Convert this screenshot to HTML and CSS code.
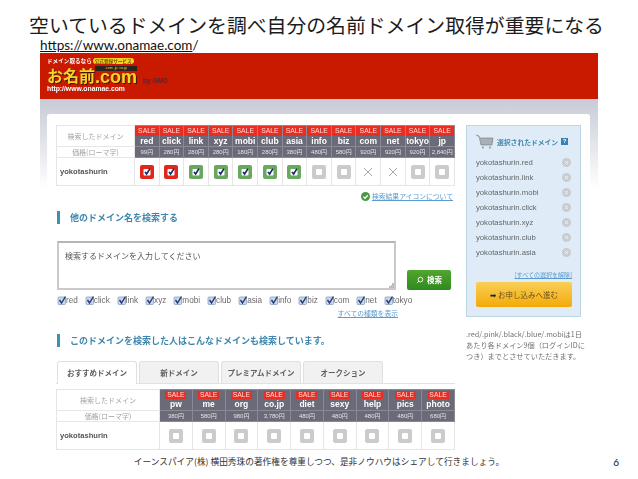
FILE: index.html
```html
<!DOCTYPE html>
<html lang="ja">
<head>
<meta charset="utf-8"/>
<title>空いているドメインを調べ自分の名前ドメイン取得が重要になる</title>
<link rel="stylesheet" href="styles.css">
</head>
<body>
<svg class="defs" width="0" height="0">
  <symbol id="box" viewBox="0 0 14 14"><rect width="14" height="14" rx="2" fill="currentColor"/><rect x="4" y="4" width="6" height="6" rx="1" fill="#fff"/></symbol>
  <symbol id="chk" viewBox="0 0 14 14"><rect width="14" height="14" rx="2" fill="currentColor"/><rect x="3.5" y="4" width="7" height="6.5" rx="1" fill="#fff"/><path d="M5 7l1.6 2L10 3.6" fill="none" stroke="#17306b" stroke-width="1.7"/></symbol>
  <symbol id="cross" viewBox="0 0 14 14"><path d="M3 3l8 8M11 3l-8 8" fill="none" stroke="#a9a9a9" stroke-width="1"/></symbol>
  <symbol id="del" viewBox="0 0 9 9"><circle cx="4.5" cy="4.5" r="4.5" fill="#c9cdd0"/><path d="M3 3l3 3M6 3l-3 3" stroke="#eef1f3" stroke-width="1"/></symbol>
  <symbol id="tick" viewBox="0 0 9 9"><rect x="1" y="1" width="7.5" height="7.5" rx="1" fill="#c9d8ea" stroke="#7f97b8" stroke-width=".7"/><path d="M2.5 4l2 3L8.5 .5" fill="none" stroke="#1f3a6e" stroke-width="1.4"/></symbol>
</svg>

<h1 class="title">空いているドメインを調べ自分の名前ドメイン取得が重要になる</h1>
<p class="url"><u>https://www.onamae.com</u>/</p>

<div class="shot">
  <header class="brand">
    <div class="logo">
      <div class="logo-top">ドメイン取るなら<span class="logo-pill">公式登録サービス</span></div>
      <div class="logo-name">
        <span class="logo-kanji">お名前</span>
        <span class="logo-right"><span class="logo-tag">.com .jp .co.jp</span><span class="logo-com">.com</span></span>
      </div>
      <div class="logo-url">http://www.onamae.com</div>
    </div>
    <span class="logo-gmo">by GMO</span>
  </header>

  <div class="backdrop">
    <div class="card">
      <main class="main">
        <table class="dom first">
          <tr class="head">
            <th class="lead">検索したドメイン</th>
            <th><b>SALE</b>red</th><th><b>SALE</b>click</th><th><b>SALE</b>link</th><th><b>SALE</b>xyz</th><th><b>SALE</b>mobi</th><th><b>SALE</b>club</th><th><b>SALE</b>asia</th><th><b>SALE</b>info</th><th><b>SALE</b>biz</th><th><b>SALE</b>com</th><th><b>SALE</b>net</th><th><b>SALE</b>tokyo</th><th><b>SALE</b>jp</th>
          </tr>
          <tr class="price">
            <th class="lead">価格(ローマ字)</th>
            <td>99円</td><td>280円</td><td>280円</td><td>280円</td><td>180円</td><td>280円</td><td>380円</td><td>480円</td><td>580円</td><td>920円</td><td>920円</td><td>920円</td><td>2,840円</td>
          </tr>
          <tr class="row">
            <td class="name">yokotashurin</td>
            <td><svg class="mark red"><use href="#chk"/></svg></td>
            <td><svg class="mark red"><use href="#chk"/></svg></td>
            <td><svg class="mark green"><use href="#chk"/></svg></td>
            <td><svg class="mark green"><use href="#chk"/></svg></td>
            <td><svg class="mark green"><use href="#chk"/></svg></td>
            <td><svg class="mark green"><use href="#chk"/></svg></td>
            <td><svg class="mark green"><use href="#chk"/></svg></td>
            <td><svg class="mark grey"><use href="#box"/></svg></td>
            <td><svg class="mark grey"><use href="#box"/></svg></td>
            <td><svg class="mark"><use href="#cross"/></svg></td>
            <td><svg class="mark"><use href="#cross"/></svg></td>
            <td><svg class="mark grey"><use href="#box"/></svg></td>
            <td><svg class="mark grey"><use href="#box"/></svg></td>
          </tr>
        </table>
        <div class="legend">
          <svg class="legend-icon" viewBox="0 0 9 9"><circle cx="4.5" cy="4.5" r="4.5" fill="#4a9a45"/><path d="M2.4 4.6l1.6 1.6 2.8-3" fill="none" stroke="#fff" stroke-width="1.3"/></svg>
          <a class="link">検索結果アイコンについて</a>
        </div>

        <h2 class="heading first-heading">他のドメイン名を検索する</h2>
        <div class="search">
          <div class="input">検索するドメインを入力してください</div>
          <div class="go">
            <svg class="go-icon" viewBox="0 0 9 9"><circle cx="5" cy="4" r="2.6" fill="none" stroke="#fff" stroke-width="1"/><path d="M3 6L1.2 8" stroke="#fff" stroke-width="1"/></svg>検索
          </div>
        </div>
        <div class="tlds">
          <span><svg class="tick"><use href="#tick"/></svg>red</span>
          <span><svg class="tick"><use href="#tick"/></svg>click</span>
          <span><svg class="tick"><use href="#tick"/></svg>link</span>
          <span><svg class="tick"><use href="#tick"/></svg>xyz</span>
          <span><svg class="tick"><use href="#tick"/></svg>mobi</span>
          <span><svg class="tick"><use href="#tick"/></svg>club</span>
          <span><svg class="tick"><use href="#tick"/></svg>asia</span>
          <span><svg class="tick"><use href="#tick"/></svg>info</span>
          <span><svg class="tick"><use href="#tick"/></svg>biz</span>
          <span><svg class="tick"><use href="#tick"/></svg>com</span>
          <span><svg class="tick"><use href="#tick"/></svg>net</span>
          <span><svg class="tick"><use href="#tick"/></svg>tokyo</span>
        </div>
        <div class="all-types"><a class="link">すべての種類を表示</a></div>

        <h2 class="heading">このドメインを検索した人はこんなドメインも検索しています。</h2>
        <nav class="tabs">
          <span class="tab active">おすすめドメイン</span>
          <span class="tab">新ドメイン</span>
          <span class="tab">プレミアムドメイン</span>
          <span class="tab">オークション</span>
        </nav>
        <table class="dom second">
          <tr class="head">
            <th class="lead">検索したドメイン</th>
            <th><b>SALE</b>pw</th><th><b>SALE</b>me</th><th><b>SALE</b>org</th><th><b>SALE</b>co.jp</th><th><b>SALE</b>diet</th><th><b>SALE</b>sexy</th><th><b>SALE</b>help</th><th><b>SALE</b>pics</th><th><b>SALE</b>photo</th>
          </tr>
          <tr class="price">
            <th class="lead">価格(ローマ字)</th>
            <td>380円</td><td>580円</td><td>980円</td><td>3,780円</td><td>480円</td><td>480円</td><td>480円</td><td>480円</td><td>680円</td>
          </tr>
          <tr class="row">
            <td class="name">yokotashurin</td>
            <td><svg class="mark grey"><use href="#box"/></svg></td>
            <td><svg class="mark grey"><use href="#box"/></svg></td>
            <td><svg class="mark grey"><use href="#box"/></svg></td>
            <td><svg class="mark grey"><use href="#box"/></svg></td>
            <td><svg class="mark grey"><use href="#box"/></svg></td>
            <td><svg class="mark grey"><use href="#box"/></svg></td>
            <td><svg class="mark grey"><use href="#box"/></svg></td>
            <td><svg class="mark grey"><use href="#box"/></svg></td>
            <td><svg class="mark grey"><use href="#box"/></svg></td>
          </tr>
        </table>
      </main>

      <aside class="side">
        <div class="panel">
          <div class="panel-head">
            <svg class="cart" viewBox="0 0 18 15"><path d="M0 1l3 1 2 9h11l1-7H4" fill="#aab1b6" stroke="#6f7579" stroke-width=".6"/><circle cx="7" cy="13.5" r="1" fill="#8a9094"/><circle cx="14" cy="13.5" r="1" fill="#8a9094"/></svg>
            <span>選択されたドメイン</span><i class="help">?</i>
          </div>
          <ul class="picked">
            <li>yokotashurin.red<svg class="del"><use href="#del"/></svg></li>
            <li>yokotashurin.link<svg class="del"><use href="#del"/></svg></li>
            <li>yokotashurin.mobi<svg class="del"><use href="#del"/></svg></li>
            <li>yokotashurin.click<svg class="del"><use href="#del"/></svg></li>
            <li>yokotashurin.xyz<svg class="del"><use href="#del"/></svg></li>
            <li>yokotashurin.club<svg class="del"><use href="#del"/></svg></li>
            <li>yokotashurin.asia<svg class="del"><use href="#del"/></svg></li>
          </ul>
          <div class="clear"><a class="link">[すべての選択を解除]</a></div>
          <div class="apply"><span class="arrow">➡</span> お申し込みへ進む</div>
        </div>
        <p class="note">.red/.pink/.black/.blue/.mobiは1日<br>あたり各ドメイン9個（ログインIDに<br>つき）までとさせていただきます。</p>
      </aside>
    </div>
  </div>
</div>

<footer class="foot">
  <span class="credit">イーンスパイア(株) 横田秀珠の著作権を尊重しつつ、是非ノウハウはシェアして行きましょう。</span>
  <span class="page">6</span>
</footer>
</body>
</html>
```
FILE: styles.css
```css
html, body {
  margin: 0;
  padding: 0;
}
body {
  width: 638px;
  height: 479px;
  overflow: hidden;
  background: #fff;
  color: #111;
  font-family: "Liberation Sans", "Noto Sans CJK JP", sans-serif;
}
.defs {
  position: absolute;
}
.title {
  margin: 0;
  height: 38px;
  padding: 12px 5px 0 0;
  box-sizing: border-box;
  text-align: center;
  font: 400 19.85px/26px "Noto Sans CJK JP", sans-serif;
  color: #1c1c1c;
  white-space: nowrap;
}
.url {
  margin: 0 0 0 40px;
  height: 15px;
  font: 400 13.5px/15px Lato, sans-serif;
  color: #111;
}

/* embedded screenshot */
.shot {
  margin-left: 40px;
  width: 558px;
  height: 399px;
  filter: blur(.4px);
  font-family: "Liberation Sans", "Noto Sans CJK JP", sans-serif;
  overflow: hidden;
}
.brand {
  display: flex;
  align-items: flex-end;
  height: 46px;
  padding: 5px 0 0 7px;
  box-sizing: border-box;
  background: #c91a00;
}
.logo {
  width: 95px;
  height: 41px;
  align-self: flex-start;
}
.logo-top {
  height: 7px;
  font: 700 5.6px/7px "Noto Sans CJK JP", sans-serif;
  color: #fff;
  white-space: nowrap;
}
.logo-pill {
  margin-left: 1px;
  padding: 0 2px;
  border-radius: 3px;
  background: #f3d21f;
  color: #6d5200;
  font-size: 4.6px;
}
.logo-name {
  display: flex;
  align-items: flex-end;
  height: 18px;
  margin-top: 1px;
  color: #f6d428;
  text-shadow: 1px 1px 0 #3a1b00;
  white-space: nowrap;
}
.logo-kanji {
  font: 700 16px/18px "Noto Sans CJK JP", sans-serif;
}
.logo-right {
  display: flex;
  flex-direction: column;
}
.logo-tag {
  height: 5px;
  background: #2a2320;
  color: #f6d428;
  text-align: center;
  text-shadow: none;
  font: 400 3.6px/5px "Liberation Sans", sans-serif;
}
.logo-com {
  font: 700 18px/13px "Liberation Sans", sans-serif;
}
.logo-url {
  margin-top: 1px;
  height: 8px;
  font: 700 6.8px/8px "Liberation Sans", sans-serif;
  color: #fff;
  white-space: nowrap;
}
.logo-gmo {
  margin: 0 0 15px 1px;
  font: 700 6.5px/6px "Liberation Sans", sans-serif;
  color: #5f2230;
}
.backdrop {
  padding-top: 15px;
  height: 353px;
  box-sizing: border-box;
  background: linear-gradient(#c8cbd6, #fff 90px);
}
.card {
  display: flex;
  gap: 11px;
  margin: 0 8px 0 7px;
  height: 338px;
  padding: 11px 9px 0;
  box-sizing: border-box;
  background: #fff;
  border-radius: 3px 3px 0 0;
}
.main {
  width: 399px;
  flex: none;
}
.side {
  width: 115px;
  flex: none;
}

/* domain tables */
.dom {
  width: 399px;
  border-collapse: collapse;
  table-layout: fixed;
  border: 1px solid #e4e4e4;
}
.dom th, .dom td {
  padding: 0;
  border: 1px solid #e6e6e6;
  text-align: center;
}
.first .lead { width: 77px; }
.second .lead { width: 102px; }
.head th {
  height: 20px;
  background: #6a6a78;
  border-color: #8a8a96;
  color: #fff;
  font: 700 8.5px/10px "Liberation Sans", sans-serif;
}
.head b {
  display: block;
  background: #ea2d22;
  font: 400 6.8px/10px "Liberation Sans", sans-serif;
  color: #ffdcd6;
}
.second .head b {
  width: 21px;
  height: 8px;
  margin: 0 auto;
  line-height: 8px;
  border-radius: 1px;
}
.price td {
  height: 10px;
  background: #6a6a78;
  border-color: #8a8a96;
  color: #e4e4ea;
  font: 400 6px/10px "Liberation Sans", "Noto Sans CJK JP", sans-serif;
}
.dom th.lead {
  background: #fff;
  border-color: #e6e6e6;
  color: #a3a3a3;
  font: 400 7px/10px "Noto Sans CJK JP", sans-serif;
}
.row td {
  height: 27px;
  background: #fff;
}
.dom .name {
  padding-left: 3px;
  text-align: left;
  color: #555;
  font: 700 7.6px/10px "Liberation Sans", sans-serif;
}
.mark {
  display: block;
  width: 14px;
  height: 14px;
  margin: 0 auto;
}
.red { color: #e1271b; }
.green { color: #69a85e; }
.grey { color: #cbcbcb; }
.link {
  color: #5a9bd0;
  text-decoration: underline;
  font: 400 6.8px/9px "Noto Sans CJK JP", sans-serif;
}
.legend {
  display: flex;
  justify-content: flex-end;
  align-items: center;
  gap: 2px;
  height: 9px;
  margin: 6px 2px 0 0;
}
.legend-icon {
  width: 9px;
  height: 9px;
}
.heading {
  margin: 0 0 0 1px;
  height: 13px;
  padding-left: 10px;
  border-left: 3px solid #3f8fb5;
  font: 700 9px/13px "Noto Sans CJK JP", sans-serif;
  color: #3f87ad;
  white-space: nowrap;
}
.first-heading {
  margin-top: 10px;
}
.search {
  display: flex;
  align-items: flex-end;
  gap: 11px;
  margin: 17px 0 0 1px;
}
.input {
  width: 339px;
  height: 49px;
  box-sizing: border-box;
  padding: 7px 6px;
  border: 2px solid #c9c9c9;
  border-top-color: #b5b5b5;
  background: linear-gradient(135deg, transparent 50%, #bdbdbd 50%) no-repeat right bottom / 6px 6px;
  color: #555;
  font: 400 8px/11px "Noto Sans CJK JP", sans-serif;
}
.go {
  display: flex;
  align-items: center;
  justify-content: center;
  gap: 3px;
  width: 44px;
  height: 20px;
  border-radius: 2px;
  background: linear-gradient(#52a52e, #2f8a1f);
  color: #fff;
  font: 700 7.5px/20px "Noto Sans CJK JP", sans-serif;
}
.go-icon {
  width: 8px;
  height: 8px;
}
.tlds {
  display: flex;
  gap: 7px;
  height: 9px;
  margin: 6px 0 0 1px;
  color: #6a6a6a;
  font: 400 8.2px/9px "Liberation Sans", sans-serif;
}
.tlds span {
  display: flex;
  align-items: center;
  white-space: nowrap;
}
.tick {
  width: 9px;
  height: 9px;
}
.all-types {
  width: 342px;
  height: 9px;
  margin-top: 1px;
  text-align: right;
  line-height: 9px;
}
.all-types + .heading {
  margin-top: 19px;
}
.tabs {
  display: flex;
  gap: 2px;
  height: 22px;
  margin-top: 14px;
  padding-left: 1px;
  border-bottom: 1px solid #e2e2e2;
}
.tab {
  width: 80px;
  height: 22px;
  box-sizing: border-box;
  border: 1px solid #e0e0e0;
  border-bottom: 0;
  border-radius: 3px 3px 0 0;
  background: #f1f1f1;
  color: #5d5d5d;
  text-align: center;
  font: 700 7.5px/21px "Noto Sans CJK JP", sans-serif;
}
.tab.active {
  height: 23px;
  background: #fff;
}
.second {
  margin-top: 5px;
}

/* right column */
.panel {
  height: 192px;
  box-sizing: border-box;
  padding: 0 8px 0 9px;
  border: 1px solid #bcd6e6;
  background: #dfebf6;
}
.panel-head {
  display: flex;
  align-items: center;
  gap: 3px;
  height: 29px;
  padding-top: 2px;
  box-sizing: border-box;
  color: #3f87ad;
  font: 700 6.8px/10px "Noto Sans CJK JP", sans-serif;
  white-space: nowrap;
}
.cart {
  width: 18px;
  height: 15px;
  flex: none;
}
.help {
  width: 7px;
  height: 7px;
  background: #3584b5;
  color: #fff;
  text-align: center;
  font: 700 6px/7px "Liberation Sans", sans-serif;
}
.picked {
  margin: 0;
  padding: 0;
  list-style: none;
}
.picked li {
  display: flex;
  justify-content: space-between;
  align-items: center;
  height: 15px;
  color: #62676b;
  font: 400 7.7px/15px "Liberation Sans", sans-serif;
}
.del {
  width: 9px;
  height: 9px;
  margin-right: 1px;
}
.clear {
  height: 10px;
  margin-top: 7px;
  text-align: right;
  line-height: 10px;
}
.clear .link {
  font-size: 6px;
}
.apply {
  height: 25px;
  margin-top: 5px;
  border-radius: 2px;
  background: linear-gradient(#f9cf57, #f3aa08);
  color: #6b5220;
  text-align: center;
  font: 400 7.5px/25px "Noto Sans CJK JP", sans-serif;
}
.arrow {
  color: #222;
  font-family: "DejaVu Sans", sans-serif;
}
.note {
  margin: 12px 0 0;
  color: #6f6f6f;
  white-space: nowrap;
  font: 400 7.2px/11px "Noto Sans CJK JP", sans-serif;
}

/* slide footer */
.foot {
  position: relative;
  height: 27px;
  text-align: center;
}
.credit {
  display: block;
  width: 100%;
  padding-top: 3px;
  font: 400 8.7px/13px "Noto Sans CJK JP", sans-serif;
  color: #333;
}
.page {
  position: absolute;
  right: 19px;
  top: 4px;
  font: 400 10px/13px Lato, sans-serif;
  color: #111;
}
```
